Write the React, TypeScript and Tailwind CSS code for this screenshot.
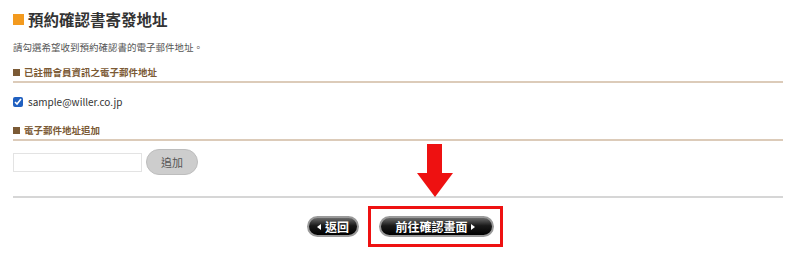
import React from 'react';

const font = { fontFamily: '"Noto Sans CJK TC", "Noto Sans", sans-serif' };

function SectionHeader({ label }: { label: string }) {
  return (
    <div className="border-b-2 border-[#dccbb9] pb-[2px]">
      <div className="flex h-[13px] items-center gap-[4px] text-[9.5px] font-bold leading-[13px] text-[#7b5a35]">
        <span className="inline-block h-[7px] w-[7px] bg-[#7b5a35]" />
        {label}
      </div>
    </div>
  );
}

function BlackButton({ children, dir }: { children: React.ReactNode; dir: 'left' | 'right' }) {
  const tri = (
    <span className="flex h-[9px] w-[7px] shrink-0 items-center justify-center">
      <svg width="4" height="6" viewBox="0 0 4 6">
        {dir === 'left' ? <polygon points="4,0 0,3 4,6" fill="#fff" /> : <polygon points="0,0 4,3 0,6" fill="#fff" />}
      </svg>
    </span>
  );
  return (
    <button className="flex h-[21px] w-full items-center justify-center gap-[2px] whitespace-nowrap rounded-full border-2 border-[#9a9a9a] bg-[linear-gradient(#6a6a6a,#1a1a1a_45%,#000)] px-[2px] text-[12px] font-bold leading-none text-white">
      {dir === 'left' && tri}
      <span>{children}</span>
      {dir === 'right' && tri}
    </button>
  );
}

export default function App() {
  return (
    <div className="relative h-[255px] w-[800px] overflow-hidden bg-white text-[#333]" style={font}>
      <div className="w-[783px] pl-[13px] pt-[11px]">
        <div className="flex h-[17px] items-center gap-[4px]">
          <span className="inline-block h-[11px] w-[11px] bg-[#f39a1e]" />
          <h2 className="text-[15.5px] font-bold leading-[17px] text-[#333]">預約確認書寄發地址</h2>
        </div>
        <p className="mt-[13px] h-[13px] text-[9.5px] leading-[13px] text-[#555]">請勾選希望收到預約確認書的電子郵件地址。</p>
        <div className="mt-[12px]">
          <SectionHeader label="已註冊會員資訊之電子郵件地址" />
        </div>
        <label className="mt-[12px] flex h-[14px] items-center gap-[5px]">
          <input type="checkbox" defaultChecked className="m-0 h-[10px] w-[10px] accent-[#2060c0]" />
          <span className="text-[10px] leading-[14px] text-[#333]">sample@willer.co.jp</span>
        </label>
        <div className="mt-[15px]">
          <SectionHeader label="電子郵件地址追加" />
        </div>
        <div className="mt-[8px] flex items-center gap-[4px]">
          <input className="h-[19px] w-[129px] border border-[#e3e3e3] bg-white px-1 text-[12px]" />
          <button className="h-[26px] w-[52px] rounded-full border border-[#bdbdbd] bg-[#cdcdcd] text-[11px] text-[#555]">追加</button>
        </div>
        <div className="mt-[21px] border-b-2 border-[#d6d6d6]" />
        <div className="mt-[8px] flex items-center justify-center gap-[9px] pl-[13px]">
          <div className="w-[52px]">
            <BlackButton dir="left">返回</BlackButton>
          </div>
          <div className="border-[3px] border-[#ee1111] pb-[7px] pl-[8px] pr-[6px] pt-[7px]">
            <div className="w-[115px]">
              <BlackButton dir="right">前往確認畫面</BlackButton>
            </div>
          </div>
        </div>
      </div>
      <svg className="absolute left-[417px] top-[144px]" width="36" height="53" viewBox="0 0 36 53">
        <polygon points="10,0 25,0 25,29 36,29 18,53 0,29 10,29" fill="#ee1111" />
      </svg>
    </div>
  );
}
